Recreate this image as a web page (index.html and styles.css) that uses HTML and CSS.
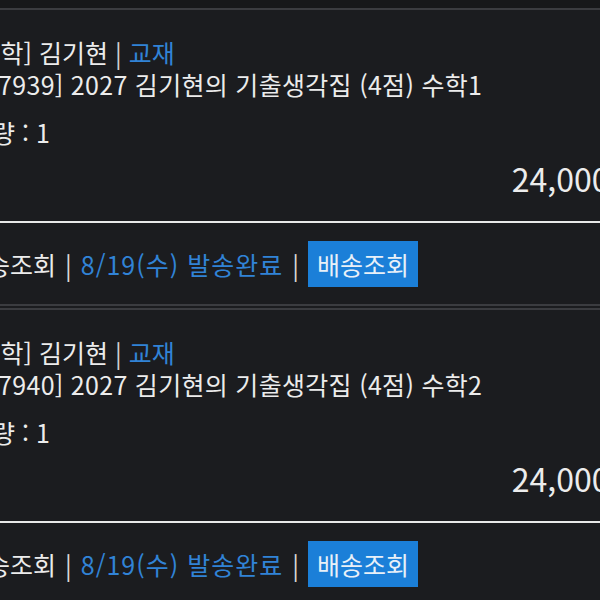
FILE: index.html
```html
<!DOCTYPE html>
<html lang="ko">
<head>
<meta charset="utf-8">
<link rel="stylesheet" href="styles.css">
</head>
<body>
<div class="page">
  <div class="topband"></div>
  <section class="order first">
    <div class="info">
      <div class="meta">[수학] 김기현 <span class="bar">|</span> <span class="blue">교재</span></div>
      <div class="title">[207939] 2027 김기현의 기출생각집 (4점) 수학1</div>
      <div class="qty">수량 : 1</div>
      <div class="price">24,000원</div>
    </div>
    <div class="ship">
      <span class="first-label">배송조회</span><span class="sep">|</span><span class="blue status">8/19(수) 발송완료</span><span class="sep">|</span><span class="btn">배송조회</span>
    </div>
  </section>
  <section class="order">
    <div class="info">
      <div class="meta">[수학] 김기현 <span class="bar">|</span> <span class="blue">교재</span></div>
      <div class="title">[207940] 2027 김기현의 기출생각집 (4점) 수학2</div>
      <div class="qty">수량 : 1</div>
      <div class="price">24,000원</div>
    </div>
    <div class="ship">
      <span class="first-label">배송조회</span><span class="sep">|</span><span class="blue status">8/19(수) 발송완료</span><span class="sep">|</span><span class="btn">배송조회</span>
    </div>
  </section>
</div>
</body>
</html>
```

FILE: styles.css
```css
html, body {
  margin: 0;
  padding: 0;
  background: #1b1c1f;
  overflow: hidden;
}
.page {
  width: 600px;
  height: 600px;
  overflow: hidden;
  font-family: "Noto Sans CJK KR", "Noto Sans", sans-serif;
  color: #ececec;
}
.topband {
  height: 8px;
  background: #17181a;
}
.order {
  border-top: 6px double #3b3c40;
}
.order.first {
  border-top: 2px solid #3b3c40;
}
.info {
  margin-left: -31px;
  width: 700px;
  padding-top: 26px;
  font-size: 25px;
  line-height: 32px;
  white-space: nowrap;
}
.title {
  text-indent: -8px;
  letter-spacing: 0.3px;
}
.blue { color: #3183d6; }
.bar { color: #cfcfcf; }
.qty { margin-top: 16px; }
.price {
  margin-top: 10px;
  font-size: 32px;
  line-height: 40px;
  text-align: right;
  padding-right: 30px;
}
.ship {
  margin-top: 23px;
  border-top: 2px solid #e8e8e8;
  padding: 18px 0 17px;
  display: flex;
  align-items: center;
  font-size: 25px;
  line-height: 46px;
  height: 46px;
  white-space: nowrap;
}
.first-label { margin-left: -36px; }
.status { letter-spacing: 1px; }
.sep {
  color: #d8d8d8;
  margin: 0 9px;
}
.btn {
  background: #1b7fd8;
  color: #e8f0f8;
  padding: 0 9px;
  height: 46px;
  line-height: 46px;
}
```
